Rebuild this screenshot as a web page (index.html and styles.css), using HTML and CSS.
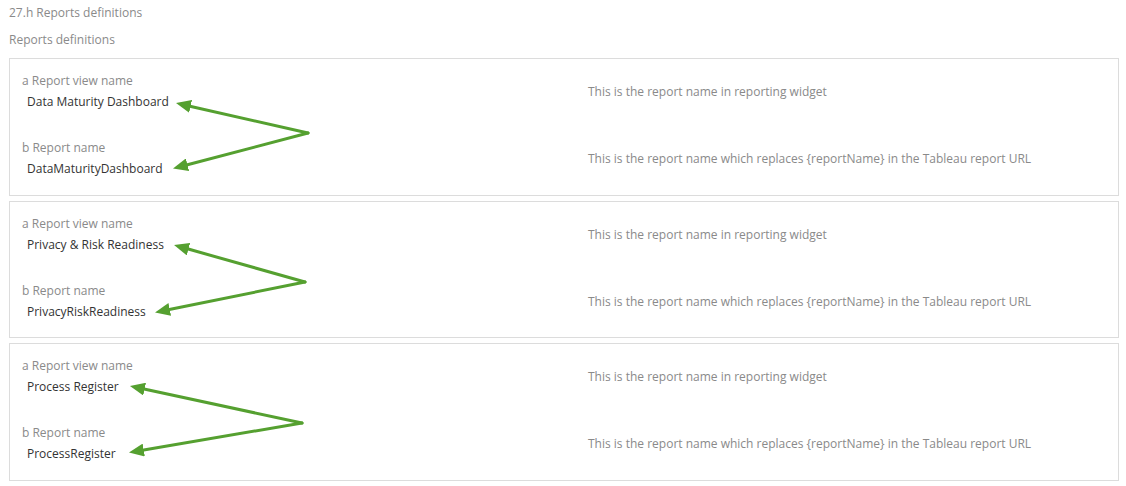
FILE: index.html
```html
<!DOCTYPE html>
<html>
<head>
<meta charset="utf-8">
<link rel="stylesheet" href="styles.css">
</head>
<body>
<div class="page">
  <div class="crumb">27.h Reports definitions</div>
  <div class="section-title">Reports definitions</div>

  <div class="box">
    <div class="row">
      <div class="field"><div class="label">a Report view name</div><div class="value">Data Maturity Dashboard</div></div>
      <div class="desc">This is the report name in reporting widget</div>
    </div>
    <div class="row">
      <div class="field"><div class="label">b Report name</div><div class="value">DataMaturityDashboard</div></div>
      <div class="desc">This is the report name which replaces {reportName} in the Tableau report URL</div>
    </div>
    <svg class="arrows" width="320" height="135" viewBox="0 0 320 135">
      <defs>
        <marker id="ah1" viewBox="0 0 15 13" refX="3" refY="6.5" markerWidth="15" markerHeight="13" markerUnits="userSpaceOnUse" orient="auto">
          <path d="M0,0 L15,6.5 L0,13 Z" fill="#55a030"/>
        </marker>
      </defs>
      <line x1="298" y1="74" x2="177.7" y2="46.7" class="arr" marker-end="url(#ah1)"/>
      <line x1="298" y1="74" x2="174.6" y2="106.5" class="arr" marker-end="url(#ah1)"/>
    </svg>
  </div>

  <div class="box">
    <div class="row">
      <div class="field"><div class="label">a Report view name</div><div class="value">Privacy &amp; Risk Readiness</div></div>
      <div class="desc">This is the report name in reporting widget</div>
    </div>
    <div class="row">
      <div class="field"><div class="label">b Report name</div><div class="value">PrivacyRiskReadiness</div></div>
      <div class="desc">This is the report name which replaces {reportName} in the Tableau report URL</div>
    </div>
    <svg class="arrows" width="320" height="135" viewBox="0 0 320 135">
      <line x1="295" y1="80" x2="175.6" y2="46.3" class="arr" marker-end="url(#ah1)"/>
      <line x1="295" y1="80" x2="156.8" y2="108" class="arr" marker-end="url(#ah1)"/>
    </svg>
  </div>

  <div class="box">
    <div class="row">
      <div class="field"><div class="label">a Report view name</div><div class="value">Process Register</div></div>
      <div class="desc">This is the report name in reporting widget</div>
    </div>
    <div class="row">
      <div class="field"><div class="label">b Report name</div><div class="value">ProcessRegister</div></div>
      <div class="desc">This is the report name which replaces {reportName} in the Tableau report URL</div>
    </div>
    <svg class="arrows" width="320" height="135" viewBox="0 0 320 135">
      <line x1="292" y1="79" x2="131.7" y2="44.5" class="arr" marker-end="url(#ah1)"/>
      <line x1="292" y1="79" x2="130.8" y2="106.5" class="arr" marker-end="url(#ah1)"/>
    </svg>
  </div>
</div>
</body>
</html>
```

FILE: styles.css
```css
html, body {
  margin: 0;
  padding: 0;
  background: #ffffff;
}

body {
  font-family: "Open Sans", "Liberation Sans", sans-serif;
  font-size: 12px;
  line-height: 17px;
  color: #333333;
}

.page {
  padding: 4px 7px 0 9px;
}

.crumb,
.section-title {
  color: #8a8a8a;
  margin-bottom: 10px;
}

.box {
  position: relative;
  border: 1px solid #dcdcdc;
  padding: 13px 13px 17.5px 12px;
  margin-bottom: 5px;
  display: flex;
  flex-direction: column;
  gap: 29px;
}

.row {
  display: grid;
  grid-template-columns: 566px 1fr;
  align-items: center;
}

.label {
  color: #8a8a8a;
}

.value {
  color: #333333;
  margin-top: 4px;
  padding-left: 5px;
}

.desc {
  color: #8a8a8a;
  padding-top: 1px;
}

.arrows {
  position: absolute;
  left: 0;
  top: 0;
  pointer-events: none;
}

.arr {
  stroke: #55a030;
  stroke-width: 3;
  stroke-linecap: round;
}
```
